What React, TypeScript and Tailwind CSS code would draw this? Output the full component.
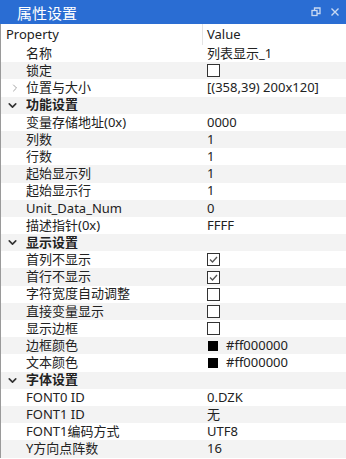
import { ChevronDown, ChevronRight } from 'lucide-react';

type Row =
  | { kind: 'cat'; name: string }
  | { kind: 'text'; name: string; value: string; expandable?: boolean }
  | { kind: 'check'; name: string; checked: boolean }
  | { kind: 'color'; name: string; value: string };

const rows: Row[] = [
  { kind: 'text', name: '名称', value: '列表显示_1' },
  { kind: 'check', name: '锁定', checked: false },
  { kind: 'text', name: '位置与大小', value: '[(358,39) 200x120]', expandable: true },
  { kind: 'cat', name: '功能设置' },
  { kind: 'text', name: '变量存储地址(0x)', value: '0000' },
  { kind: 'text', name: '列数', value: '1' },
  { kind: 'text', name: '行数', value: '1' },
  { kind: 'text', name: '起始显示列', value: '1' },
  { kind: 'text', name: '起始显示行', value: '1' },
  { kind: 'text', name: 'Unit_Data_Num', value: '0' },
  { kind: 'text', name: '描述指针(0x)', value: 'FFFF' },
  { kind: 'cat', name: '显示设置' },
  { kind: 'check', name: '首列不显示', checked: true },
  { kind: 'check', name: '首行不显示', checked: true },
  { kind: 'check', name: '字符宽度自动调整', checked: false },
  { kind: 'check', name: '直接变量显示', checked: false },
  { kind: 'check', name: '显示边框', checked: false },
  { kind: 'color', name: '边框颜色', value: '#ff000000' },
  { kind: 'color', name: '文本颜色', value: '#ff000000' },
  { kind: 'cat', name: '字体设置' },
  { kind: 'text', name: 'FONT0 ID', value: '0.DZK' },
  { kind: 'text', name: 'FONT1 ID', value: '无' },
  { kind: 'text', name: 'FONT1编码方式', value: 'UTF8' },
  { kind: 'text', name: 'Y方向点阵数', value: '16' },
];

function CheckBox({ checked }: { checked: boolean }) {
  return (
    <span className="flex h-[13px] w-[13px] items-center justify-center border border-[#333333] bg-white">
      {checked && (
        <svg width="11" height="11" viewBox="0 0 11 11">
          <path d="M2 5.5 L4.5 8 L9 3" fill="none" stroke="#555555" strokeWidth="1.3" />
        </svg>
      )}
    </span>
  );
}

function Value({ row }: { row: Row }) {
  if (row.kind === 'check') return <CheckBox checked={row.checked} />;
  if (row.kind === 'color')
    return (
      <span className="flex items-center gap-[8px]">
        <span className="ml-[1px] h-[10px] w-[10px] bg-black" />
        <span>{row.value}</span>
      </span>
    );
  if (row.kind === 'text') return <span>{row.value}</span>;
  return null;
}

export default function App() {
  return (
    <div
      className="h-[459px] w-[346px] overflow-hidden bg-white text-[13px] text-[#222222]"
      style={{ fontFamily: '"Noto Sans", "Noto Sans CJK SC", sans-serif' }}
    >
      <div className="flex h-[24px] items-center justify-between bg-[#2a6dd3] pl-[17px] pr-[6px] text-white">
        <span className="text-[15px] leading-none" style={{ fontFamily: '"Noto Sans CJK SC", sans-serif' }}>
          属性设置
        </span>
        <div className="flex items-center gap-[9px] text-[#c9d9f2]">
          <svg width="10" height="10" viewBox="0 0 10 10">
            <rect x="1" y="3.5" width="5" height="5" fill="none" stroke="currentColor" strokeWidth="1.3" />
            <path d="M3.5 3.5 V1 H9 V6.5 H6" fill="none" stroke="currentColor" strokeWidth="1.3" />
          </svg>
          <svg width="10" height="10" viewBox="0 0 10 10">
            <path d="M1.5 1.5 L8.5 8.5 M8.5 1.5 L1.5 8.5" stroke="currentColor" strokeWidth="1.4" />
          </svg>
        </div>
      </div>
      <div className="border-l border-[#9a9a9a]">
        <div className="flex h-[21px] items-center">
          <div className="w-[201px] pl-[5px]">Property</div>
          <div className="h-full w-px bg-[#e4e4e4]" />
          <div className="pl-[4px]">Value</div>
        </div>
        {rows.map((row, i) => (
          <div
            key={i}
            className={`flex h-[17.2px] items-center ${i % 2 === 1 ? 'bg-[#f3f3f3]' : 'bg-white'}`}
          >
            <div className="flex w-[202px] items-center">
              <span className="flex w-[25px] items-center pl-[5px]">
                {row.kind === 'cat' && <ChevronDown size={13} strokeWidth={3} className="text-[#333333]" />}
                {row.kind === 'text' && row.expandable && (
                  <ChevronRight size={12} strokeWidth={1.8} className="ml-[3px] text-[#9a9a9a]" />
                )}
              </span>
              <span className={row.kind === 'cat' ? 'font-semibold' : ''}>{row.name}</span>
            </div>
            <div className="flex items-center pl-[4px]">
              <Value row={row} />
            </div>
          </div>
        ))}
      </div>
    </div>
  );
}
